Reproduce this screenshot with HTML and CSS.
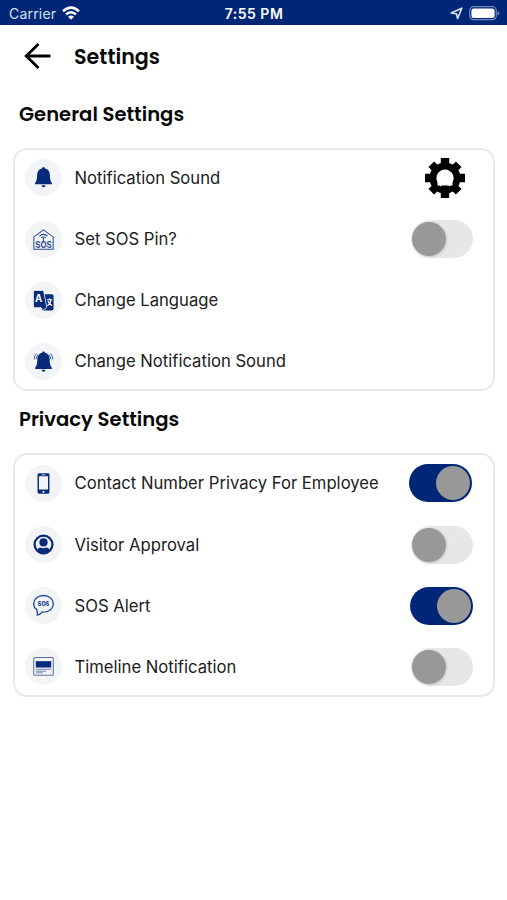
FILE: index.html
```html
<!DOCTYPE html>
<html lang="en">
<head>
<meta charset="utf-8">
<title>Settings</title>
<link rel="stylesheet" href="styles.css">
</head>
<body>
<div class="status">
  <div class="status-left"><span class="carrier">Carrier</span>
    <svg width="18" height="14" viewBox="0 0 18 14" fill="none" stroke="#fff" stroke-width="2.5"><path d="M1 5.2Q9-2 17 5.2M4 8.4Q9 4 14 8.4"/><path d="M6 10.7Q9 8.3 12 10.7L9 13.8Z" fill="#fff" stroke="none"/></svg>
  </div>
  <span class="time">7:55 PM</span>
  <div class="status-right">
    <svg width="13" height="13" viewBox="0 0 13 13" fill="none" stroke="#dce5ff" stroke-width="1.6" stroke-linejoin="round"><path d="M1.2 6L11.8 1.2 7.6 11.5 6.4 6.8Z"/></svg>
    <svg width="31" height="15" viewBox="0 0 31 15"><rect x=".7" y=".7" width="26.6" height="13" rx="4" fill="none" stroke="#7187bd" stroke-width="1.2"/><rect x="2.4" y="2.4" width="23.2" height="9.6" rx="2.3" fill="#fff"/><path d="M28.6 5Q30.4 5.8 30.4 7.2T28.6 9.4Z" fill="#7187bd"/></svg>
  </div>
</div>
<header class="topbar">
  <svg width="27" height="26" viewBox="0 0 27 26" fill="none" stroke="#000" stroke-width="2.8"><path d="M26.5 13H2.5M14.5 1L2.2 13 14.5 25"/></svg>
  <h1>Settings</h1>
</header>
<main>
  <h2 class="general">General Settings</h2>
  <section class="card">
    <div class="row">
      <span class="icon"><svg viewBox="0 0 36 36"><path d="M18 7.7q1.5 0 1.5 1.5c3.2.7 4.6 3.2 4.7 6.3.1 4.2.6 6 2 7.8v1.3H9.8v-1.3c1.4-1.8 1.9-3.6 2-7.8.1-3.1 1.5-5.6 4.7-6.3q0-1.5 1.5-1.5ZM16 25.5h4q-.3 1.9-2 1.9t-2-1.9Z"/></svg></span>
      <span class="label">Notification Sound</span>
      <svg class="gear" viewBox="-20 -20 40 40"><path d="M-4.2-20h8.4v40h-8.4zM-20-4.2h40v8.4h-40z"/><path transform="rotate(45)" d="M-4-19.4h8v38.8h-8zM-19.4-4h38.8v8h-38.8z"/><circle r="15.5"/><path fill="#fff" d="M-7.5 7.6V4.4A8.6 8.6 0 1 1 7.5 4.4v3.2H5.5L4.5 8.5 3.5 7.6H-3.5l-1 .9-1-.9Z"/></svg>
    </div>
    <div class="row">
      <span class="icon"><svg viewBox="0 0 36 36" class="line"><path d="M8.6 27.5V15.5L18 8.7l9.4 6.8v12Z"/><path d="M14 14.7q4-3.4 8 0M15.7 16.5q2.3-2 4.6 0M18 16.5v3"/><text x="18" y="26.2" textLength="16" lengthAdjust="spacingAndGlyphs" class="sos-home">SOS</text></svg></span>
      <span class="label">Set SOS Pin?</span><span class="toggle"></span>
    </div>
    <div class="row">
      <span class="icon"><svg viewBox="0 0 36 36"><path d="M19 12h7.2q1.6 0 1.6 1.6v12.5q0 1.7-1.6 1.7H18l-2-3h3.8Z"/><path d="M9.7 8.2h7.2q1.1 0 1.4 1l2.9 15.6-4.2 3.2-1.2-3H9.7q-1.5 0-1.5-1.5V9.7q0-1.5 1.5-1.5Z" stroke="#f3f4f5" stroke-width=".8"/><text x="13.2" y="19.3" class="letter">A</text><path d="M21.4 17.3h5.2M24 15.8v1.5M21.8 23q3-1.7 3.4-5.2M22.3 18.5q1.3 3.3 4 4.5" fill="none" stroke="#fff" stroke-width="1.1"/></svg></span>
      <span class="label">Change Language</span>
    </div>
    <div class="row">
      <span class="icon"><svg viewBox="0 0 36 36"><path d="M18 8.2q1.4 0 1.4 1.4c3 .6 4.5 3 4.6 6.4.1 4.2.6 6.3 2.1 8v1.2H9.9V24c1.5-1.7 2-3.8 2.1-8 .1-3.4 1.6-5.8 4.6-6.4q0-1.4 1.4-1.4ZM16 26h4q-.3 2-2 2t-2-2Z"/><path d="M11 10.3Q8.9 12.5 8.9 16M25 10.3q2.1 2.2 2.1 5.7M12.7 11.4q-1.6 1.8-1.8 4.4M23.3 11.4q1.6 1.8 1.8 4.4" fill="none" stroke="#284b98" stroke-width=".9"/></svg></span>
      <span class="label">Change Notification Sound</span>
    </div>
  </section>
  <h2 class="privacy">Privacy Settings</h2>
  <section class="card">
    <div class="row">
      <span class="icon"><svg viewBox="0 0 36 36"><path fill-rule="evenodd" d="M13.6 8h8.8q1.4 0 1.4 1.4v17.2q0 1.4-1.4 1.4h-8.8q-1.4 0-1.4-1.4V9.4q0-1.4 1.4-1.4ZM13.6 11v12.8h8.8V11ZM16 9.2v.7h4v-.7ZM18 25a1 1 0 1 0 .01 0Z"/></svg></span>
      <span class="label">Contact Number Privacy For Employee</span><span class="toggle on first"></span>
    </div>
    <div class="row">
      <span class="icon"><svg viewBox="0 0 36 36"><circle cx="18" cy="18" r="8.7" fill="none" stroke="#082a7b" stroke-width="2.2"/><circle cx="18" cy="16" r="4"/><path d="M12 23.8q.8-2.8 3.4-2.8 2.6 1.1 5.2 0 2.6 0 3.4 2.8-2.6 2.6-6 2.6t-6-2.6Z"/></svg></span>
      <span class="label">Visitor Approval</span><span class="toggle"></span>
    </div>
    <div class="row">
      <span class="icon"><svg viewBox="0 0 36 36" class="line"><path stroke-width="1.3" d="M11.2 21.8C9.2 20.4 8.4 18.5 8.4 16.4c0-4.6 4-8.1 9.6-8.1s9.6 3.5 9.6 8.1-4 8-9.6 8h-1.5q-1.8 2.5-4.5 2.9.6-2.7-.8-5.5Z"/><text x="18" y="18.6" textLength="11" lengthAdjust="spacingAndGlyphs" class="sos-chat">SOS</text></svg></span>
      <span class="label">SOS Alert</span><span class="toggle on"></span>
    </div>
    <div class="row">
      <span class="icon"><svg viewBox="0 0 36 36"><rect x="8.5" y="9.3" width="19" height="17.2" rx="1" fill="none" stroke="#5770a9"/><path d="M10.5 12.8h15v6.2h-15z"/><path d="M10.5 20.7h15M10.5 22.6h10M10.5 24.2h7" stroke="#5770a9" stroke-width=".8"/></svg></span>
      <span class="label">Timeline Notification</span><span class="toggle"></span>
    </div>
  </section>
</main>
</body>
</html>
```

FILE: styles.css
```css
* { box-sizing: border-box; }
body { margin: 0; width: 507px; height: 900px; background: #fff; color: #202020; font-family: Inter, "Liberation Sans", sans-serif; overflow: hidden; }
.status { height: 25px; padding: 1px 7px 0 9px; background: #002777; color: #fff; display: grid; grid-template-columns: 1fr auto 1fr; align-items: center; font-size: 14px; }
.status-left, .status-right { display: flex; align-items: center; gap: 6px; }
.status-right { justify-content: flex-end; }
.carrier { color: #d7e0f6; letter-spacing: .2px; }
.time { font-weight: 600; letter-spacing: .5px; margin-right: 1px; }
.topbar { height: 62px; padding-left: 24px; display: flex; align-items: center; gap: 23px; }
h1, h2 { margin: 0; color: #080808; font-family: Poppins, Inter, sans-serif; font-weight: 600; font-size: 19.6px; }
h1 { font-size: 20.7px; }
h2 { padding-left: 19px; display: flex; align-items: center; }
.general { height: 60.6px; padding-bottom: 7px; }
.privacy { height: 62px; padding-bottom: 7px; }
.card { margin: 0 12px 0 13px; height: 243.5px; border: 2px solid #e9e9ea; border-radius: 14px; padding-left: 10px; }
.row { height: 61px; display: flex; align-items: center; padding-right: 20px; }
.card .row:first-child { height: 56.5px; margin-bottom: 2.5px; }
.icon { width: 37px; height: 37px; border-radius: 50%; background: #f3f4f5; margin-right: 12.5px; flex: none; }
.icon svg { display: block; width: 37px; height: 37px; fill: #082a7b; }
.icon .line { fill: none; stroke: #284b98; stroke-width: 1; }
.icon text { text-anchor: middle; font-family: Inter, sans-serif; font-weight: 700; stroke: none; fill: #284b98; }
.icon .sos-home { font-size: 8.5px; }
.icon .sos-chat { font-size: 5.5px; font-weight: 900; }
.icon .letter { font-size: 9.5px; fill: #fff; }
.label { font-size: 16.65px; white-space: nowrap; }
.gear { width: 40px; height: 40px; margin-left: auto; margin-right: 8px; }
.toggle { width: 62px; height: 38px; margin-left: auto; padding: 2px 1px; border-radius: 19px; background: #e7e7e9; display: flex; align-items: center; }
.toggle::before { content: ""; width: 34px; height: 34px; border-radius: 50%; background: #989898; box-shadow: 1px 1px 3px #0002; }
.on { width: 63px; padding: 2px; background: #002777; justify-content: flex-end; }
.first { margin-right: 1px; }
```
